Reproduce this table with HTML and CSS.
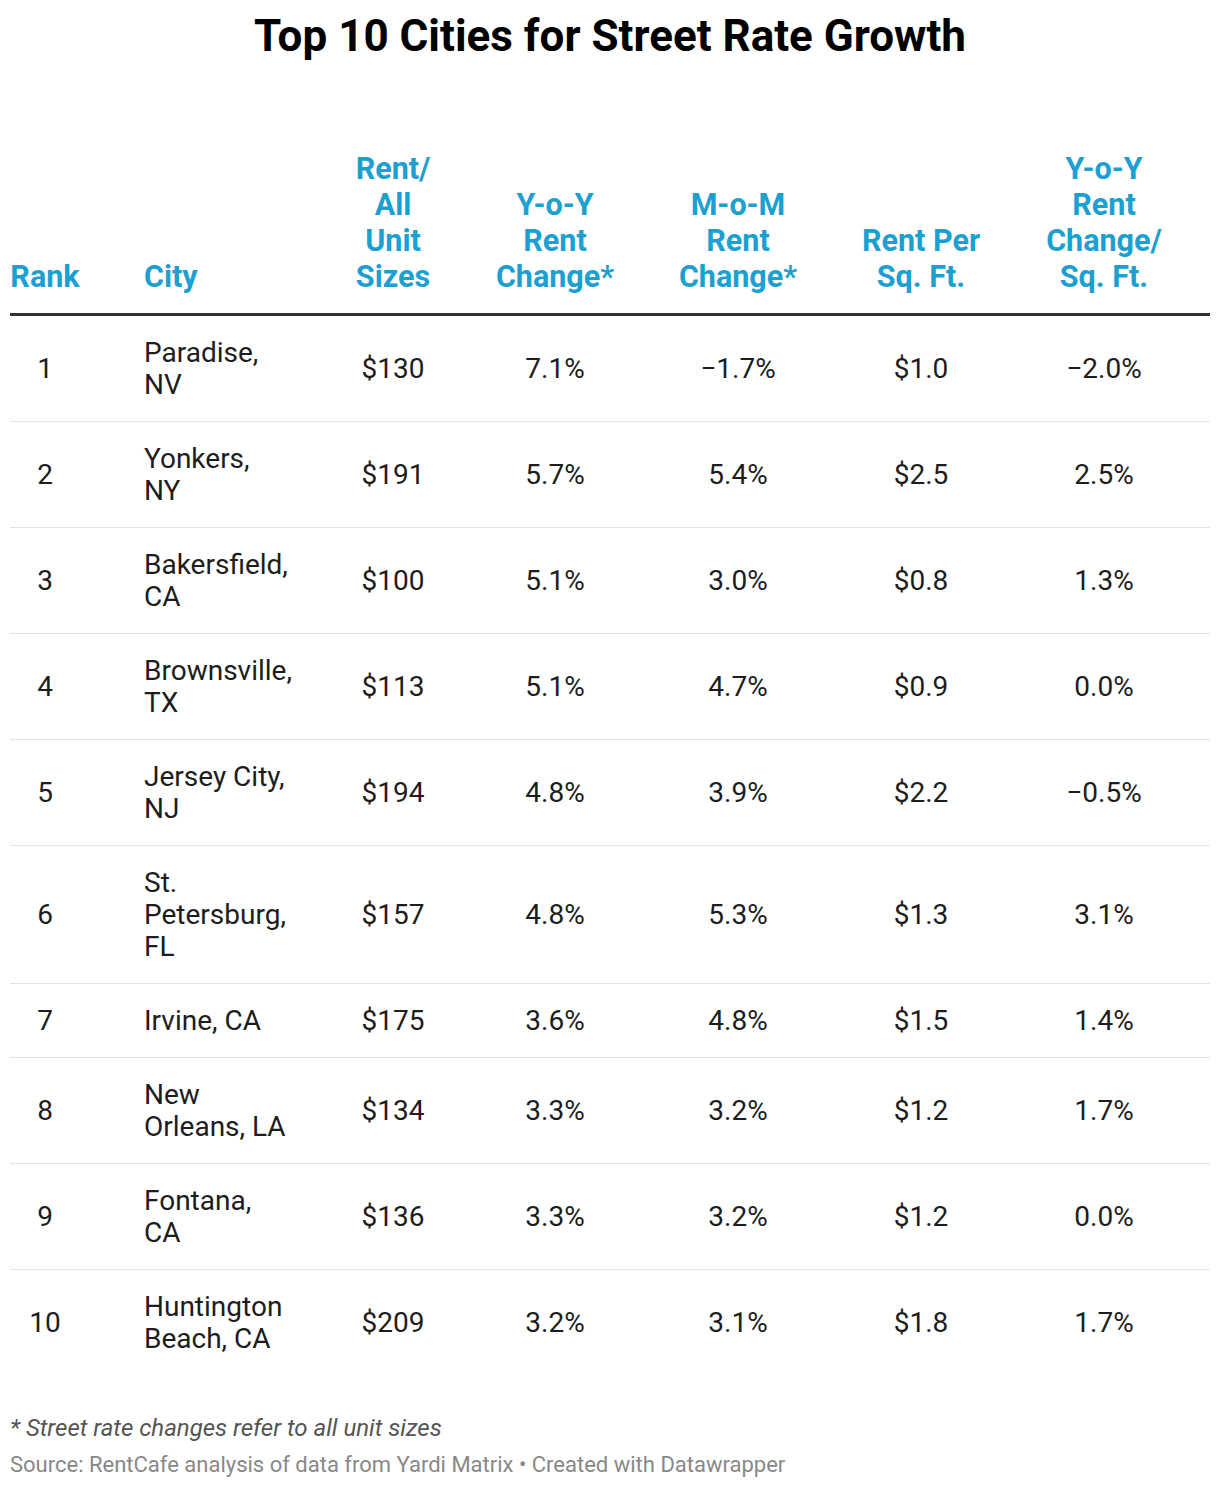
FILE: index.html
```html
<!DOCTYPE html>
<html lang="en">
<head>
<meta charset="utf-8">
<title>Top 10 Cities for Street Rate Growth</title>
<link rel="stylesheet" href="styles.css">
</head>
<body>
<div class="chart">
  <h1 class="title">Top 10 Cities for Street Rate Growth</h1>
  <table class="data">
    <colgroup>
      <col class="c-rank"><col class="c-city"><col class="c-rent"><col class="c-yoy"><col class="c-mom"><col class="c-psf"><col class="c-yoysf">
    </colgroup>
    <thead>
      <tr>
        <th class="center">Rank</th>
        <th class="left city">City</th>
        <th class="center">Rent/<br>All<br>Unit<br>Sizes</th>
        <th class="center">Y-o-Y<br>Rent<br>Change*</th>
        <th class="center">M-o-M<br>Rent<br>Change*</th>
        <th class="center">Rent Per<br>Sq. Ft.</th>
        <th class="center">Y-o-Y<br>Rent<br>Change/<br>Sq. Ft.</th>
      </tr>
    </thead>
    <tbody>
      <tr><td class="center">1</td><td class="city">Paradise,<br>NV</td><td class="center">$130</td><td class="center">7.1%</td><td class="center">−1.7%</td><td class="center">$1.0</td><td class="center">−2.0%</td></tr>
      <tr><td class="center">2</td><td class="city">Yonkers,<br>NY</td><td class="center">$191</td><td class="center">5.7%</td><td class="center">5.4%</td><td class="center">$2.5</td><td class="center">2.5%</td></tr>
      <tr><td class="center">3</td><td class="city">Bakersfield,<br>CA</td><td class="center">$100</td><td class="center">5.1%</td><td class="center">3.0%</td><td class="center">$0.8</td><td class="center">1.3%</td></tr>
      <tr><td class="center">4</td><td class="city">Brownsville,<br>TX</td><td class="center">$113</td><td class="center">5.1%</td><td class="center">4.7%</td><td class="center">$0.9</td><td class="center">0.0%</td></tr>
      <tr><td class="center">5</td><td class="city">Jersey City,<br>NJ</td><td class="center">$194</td><td class="center">4.8%</td><td class="center">3.9%</td><td class="center">$2.2</td><td class="center">−0.5%</td></tr>
      <tr><td class="center">6</td><td class="city">St.<br>Petersburg,<br>FL</td><td class="center">$157</td><td class="center">4.8%</td><td class="center">5.3%</td><td class="center">$1.3</td><td class="center">3.1%</td></tr>
      <tr><td class="center">7</td><td class="city">Irvine, CA</td><td class="center">$175</td><td class="center">3.6%</td><td class="center">4.8%</td><td class="center">$1.5</td><td class="center">1.4%</td></tr>
      <tr><td class="center">8</td><td class="city">New<br>Orleans, LA</td><td class="center">$134</td><td class="center">3.3%</td><td class="center">3.2%</td><td class="center">$1.2</td><td class="center">1.7%</td></tr>
      <tr><td class="center">9</td><td class="city">Fontana,<br>CA</td><td class="center">$136</td><td class="center">3.3%</td><td class="center">3.2%</td><td class="center">$1.2</td><td class="center">0.0%</td></tr>
      <tr><td class="center">10</td><td class="city">Huntington<br>Beach, CA</td><td class="center">$209</td><td class="center">3.2%</td><td class="center">3.1%</td><td class="center">$1.8</td><td class="center">1.7%</td></tr>
    </tbody>
  </table>
  <div class="notes">
    <p class="note">* Street rate changes refer to all unit sizes</p>
    <p class="source">Source: RentCafe analysis of data from Yardi Matrix • Created with Datawrapper</p>
  </div>
</div>
</body>
</html>
```
FILE: styles.css
```css
html, body {
  margin: 0;
  padding: 0;
  background: #ffffff;
}

body {
  font-family: Roboto, "Liberation Sans", Arial, sans-serif;
  color: #1d1d1d;
}

.chart {
  padding: 11px 10px 0 10px;
}

.title {
  margin: 0;
  font-size: 44px;
  line-height: 50px;
  font-weight: 700;
  color: #000000;
  text-align: center;
}

.data {
  margin-top: 72px;
  width: 1200px;
  border-collapse: collapse;
  table-layout: fixed;
}

.c-rank { width: 70px; }
.c-city { width: 228px; }
.c-rent { width: 170px; }
.c-yoy { width: 154px; }
.c-mom { width: 212px; }
.c-psf { width: 154px; }
.c-yoysf { width: 212px; }

.data th {
  font-size: 30.5px;
  line-height: 36px;
  font-weight: 700;
  color: #1ba0d1;
  vertical-align: bottom;
  padding: 18px 0 18px 0;
  border-bottom: 3px solid #333333;
  white-space: nowrap;
}

.data td {
  font-size: 28px;
  line-height: 32px;
  font-weight: 400;
  color: #1d1d1d;
  vertical-align: middle;
  padding: 21px 0 20px 0;
  border-bottom: 1px solid #e3e3e3;
  white-space: nowrap;
}

.data tbody tr:last-child td {
  border-bottom: none;
}

.center { text-align: center; }
.left { text-align: left; }

.data .city {
  text-align: left;
  padding-left: 64px;
}

.notes {
  margin-top: 38px;
}

.note {
  margin: 0;
  font-size: 24px;
  line-height: 30px;
  font-style: italic;
  color: #555555;
}

.source {
  margin: 7px 0 0 0;
  font-size: 22px;
  line-height: 30px;
  color: #888888;
}
```
